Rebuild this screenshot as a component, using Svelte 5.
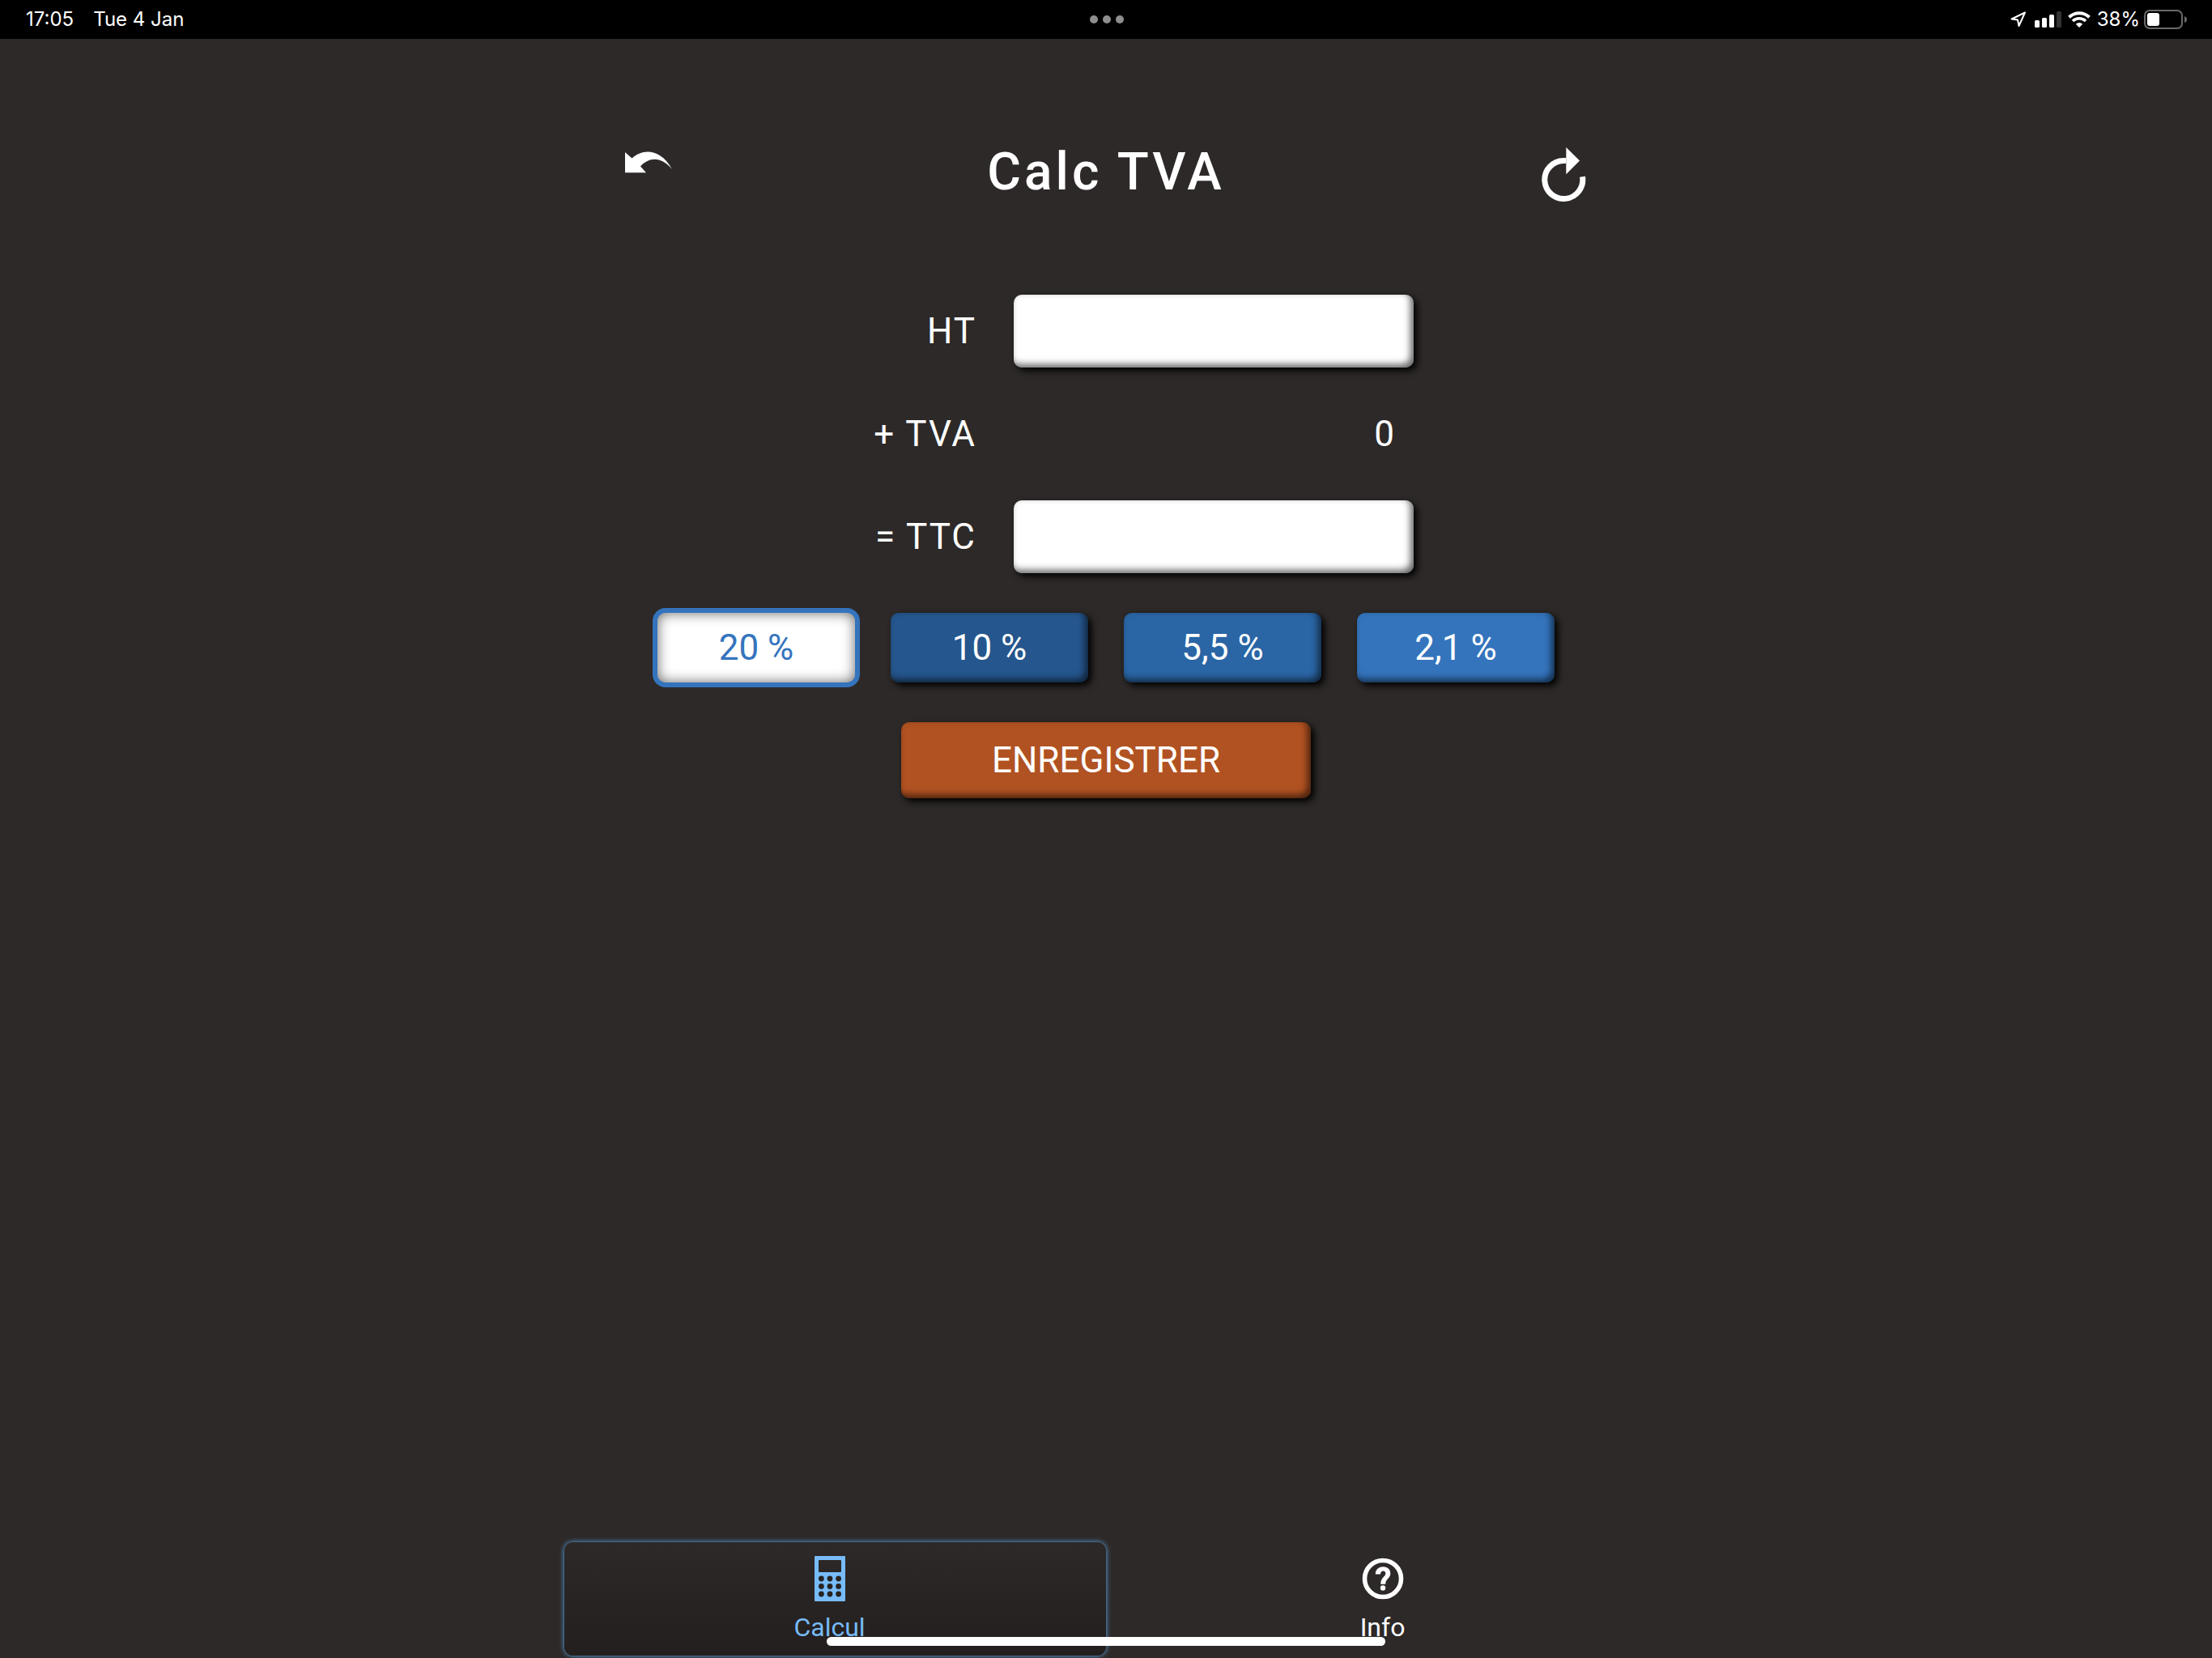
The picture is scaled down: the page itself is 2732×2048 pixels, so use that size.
<script>
  const rates = [
    { label: '20 %', tone: 'deep' },
    { label: '10 %', tone: 'dark' },
    { label: '5,5 %', tone: 'mid' },
    { label: '2,1 %', tone: 'light' }
  ];
  let selected = $state('20 %');
  let ht = $state('');
  let ttc = $state('');
</script>

<div class="screen">
  <div class="status">
    <div class="clock"><span>17:05</span><span>Tue 4 Jan</span></div>
    <svg class="dots" width="42" height="10" viewBox="0 0 42 10" fill="#8e8e8e" aria-hidden="true">
      <circle cx="5" cy="5" r="5" /><circle cx="21" cy="5" r="5" /><circle cx="37" cy="5" r="5" />
    </svg>
    <div class="indicators">
      <svg width="20" height="20" viewBox="0 0 20 20" fill="none" stroke="#fff" stroke-width="2" stroke-linejoin="round" aria-hidden="true">
        <path d="M1.5 9.5 18 1.5 10.5 18 9 10.5Z" />
      </svg>
      <svg class="signal" width="33" height="20" viewBox="0 0 33 20" fill="#fff" aria-hidden="true">
        <rect x="0" y="11" width="6" height="9" rx="1.5" />
        <rect x="9" y="8" width="6" height="12" rx="1.5" />
        <rect x="18" y="4" width="6" height="16" rx="1.5" />
        <rect x="27" y="0" width="6" height="20" rx="1.5" fill="#333" />
      </svg>
      <svg class="wifi" width="28" height="20" viewBox="0 0 28 20" aria-hidden="true">
        <path d="M1.5 7.2A18 18 0 0 1 26.5 7.2" fill="none" stroke="#fff" stroke-width="4" />
        <path d="M6 12A11.5 11.5 0 0 1 22 12" fill="none" stroke="#fff" stroke-width="3.6" />
        <path d="M14 20 9.8 15.8A6 6 0 0 1 18.2 15.8Z" fill="#fff" />
      </svg>
      <span>38%</span>
      <svg class="battery" width="54" height="24" viewBox="0 0 54 24" aria-hidden="true">
        <rect x="1" y="1" width="46" height="22" rx="6" fill="none" stroke="#6a6a6a" stroke-width="2" />
        <rect x="4" y="4" width="15" height="16" rx="3" fill="#fff" />
        <path d="M50 8Q53 9 53 12T50 16Z" fill="#6a6a6a" />
      </svg>
    </div>
  </div>

  <header>
    <button class="tool" aria-label="Annuler">
      <svg width="60" height="64" viewBox="0 0 60 64" fill="#fff">
        <path d="M1 11 9.500 18.500C22 7 44 5 59 32C46 17 32 16 20 28.500L27 36.300H1Z" />
      </svg>
    </button>
    <h1>Calc TVA</h1>
    <button class="tool" aria-label="Réinitialiser">
      <svg width="60" height="72" viewBox="0 0 60 72">
        <path d="M33.300 21.500H30A23.500 23.500 0 1 0 53.500 41.300" fill="none" stroke="#fff" stroke-width="7" />
        <path d="M33.300 5 50 21.500 33.300 38.300Z" fill="#fff" />
      </svg>
    </button>
  </header>

  <main>
    <div class="amounts">
      <label for="ht">HT</label>
      <input id="ht" type="text" inputmode="decimal" bind:value={ht} />
      <span class="name">+ TVA</span>
      <output for="ht ttc">0</output>
      <label for="ttc">= TTC</label>
      <input id="ttc" type="text" inputmode="decimal" bind:value={ttc} />
    </div>

    <div class="rates">
      {#each rates as rate}
        <button
          class={['rate', rate.tone, { chosen: selected === rate.label }]}
          aria-pressed={selected === rate.label}
          onclick={() => (selected = rate.label)}>{rate.label}</button>
      {/each}
    </div>

    <button class="save">ENREGISTRER</button>
  </main>

  <nav>
    <a class="tab current" href="#calcul" aria-current="page">
      <svg width="56" height="56" viewBox="0 0 56 56" aria-hidden="true">
        <path fill="#77bbf8" fill-rule="evenodd" d="M10 0H46Q47 0 47 1V55Q47 56 46 56H10Q9 56 9 55V1Q9 0 10 0ZM15 5Q14 5 14 6V19Q14 20 15 20H41Q42 20 42 19V6Q42 5 41 5Z" />
        <g fill="#272322">
          {#each [28, 37.5, 47] as cy}
            {#each [17.4, 28, 38.6] as cx}
              <circle {cx} {cy} r="3.4" />
            {/each}
          {/each}
        </g>
      </svg>
      <span>Calcul</span>
    </a>
    <a class="tab" href="#info">
      <svg width="56" height="56" viewBox="0 0 56 56" fill="none" stroke="#fff" aria-hidden="true">
        <circle cx="28" cy="28" r="22.500" stroke-width="5.600" />
        <path d="M18.800 22.500C18.800 10.500 37.300 10.500 37.300 21.500C37.300 28 31.200 28 31.200 34.800H25.200C25.200 26 31.300 26 31.300 21.500C31.300 17.500 25 17.500 25 22.500Z" fill="#fff" stroke="none" />
        <circle cx="28" cy="39.500" r="3.200" fill="#fff" stroke="none" />
      </svg>
      <span>Info</span>
    </a>
  </nav>
  <div class="home"></div>
</div>

<style>
  :global(body) {
    background: #2d2928;
  }
  .screen {
    position: relative;
    box-sizing: border-box;
    min-height: 100vh;
    display: flex;
    flex-direction: column;
    background: #2d2928;
    color: #fff;
    font-family: Roboto, sans-serif;
    overflow: hidden;
  }
  .status {
    display: grid;
    grid-template-columns: 1fr auto 1fr;
    align-items: center;
    height: 48px;
    padding: 0 30px 0 32px;
    background: #000;
    font: 24px/48px Inter, sans-serif;
  }
  .clock {
    display: flex;
    gap: 24px;
  }
  .indicators {
    display: flex;
    justify-content: flex-end;
    align-items: center;
  }
  .signal {
    margin-left: 10px;
  }
  .wifi {
    margin: 0 8px;
  }
  .battery {
    margin-left: 5px;
  }
  button {
    border: 0;
    margin: 0;
    padding: 0;
    color: #fff;
    font: 44px/86px Roboto, sans-serif;
    cursor: pointer;
  }
  header,
  main,
  nav {
    width: 50%;
    margin: 0 auto;
    box-sizing: border-box;
  }
  header {
    display: flex;
    justify-content: space-between;
    align-items: flex-start;
    padding: 129px 88px 0;
  }
  .tool {
    display: block;
    background: none;
    line-height: 0;
  }
  h1 {
    margin: 0;
    font-size: 64px;
    line-height: 72px;
    font-weight: 500;
    letter-spacing: 4px;
  }
  main {
    display: flex;
    flex-direction: column;
    align-items: center;
    padding-top: 115px;
  }
  .amounts {
    display: grid;
    grid-template-columns: 523fr 494fr 257fr;
    gap: 37px 46px;
    width: 100%;
    font-size: 44px;
    line-height: 90px;
    letter-spacing: 2px;
  }
  .amounts > label,
  .amounts > .name {
    grid-column: 1;
    text-align: right;
  }
  .amounts > input,
  .amounts > output {
    grid-column: 2;
    box-sizing: border-box;
    width: 100%;
    height: 90px;
    padding: 0 22px;
    border: 0;
    text-align: right;
    font: inherit;
  }
  input {
    border-radius: 10px;
    background: #fff;
    color: #2d2928;
    box-shadow: 4px 4px 8px #000, inset -4px -4px 8px rgba(0, 0, 0, 0.6);
  }
  .rates {
    display: grid;
    grid-template-columns: repeat(4, 1fr);
    gap: 44px;
    width: 100%;
    box-sizing: border-box;
    padding: 0 129px;
    margin: 49px 0;
  }
  .rate,
  .save {
    border-radius: 10px;
    box-shadow: 4px 4px 8px #000, inset -4px -4px 8px rgba(0, 0, 0, 0.6);
  }
  .deep {
    background: #1f4a79;
  }
  .dark {
    background: #25568d;
  }
  .mid {
    background: #2a65a5;
  }
  .light {
    background: #3474bd;
  }
  .chosen {
    background: #fff;
    color: #3474bd;
    box-shadow: 0 0 0 6px #3474bd, inset 0 0 16px rgba(0, 0, 0, 0.6);
  }
  .save {
    width: 37%;
    background: #b15222;
    line-height: 94px;
  }
  nav {
    display: grid;
    grid-template-columns: 1fr 1fr;
    margin-top: auto;
    padding-bottom: 3px;
  }
  .tab {
    display: flex;
    flex-direction: column;
    align-items: center;
    height: 140px;
    box-sizing: border-box;
    padding-top: 17px;
    color: #fff;
    text-decoration: none;
    font-size: 32px;
    line-height: 40px;
  }
  .tab span {
    margin-top: 12px;
  }
  .current {
    margin-left: 14px;
    padding-right: 14px;
    border-radius: 11px;
    color: #77bbf8;
    background: linear-gradient(#2d2928, #231f1e);
    box-shadow: 0 0 6px #5fb0f8;
  }
  .home {
    position: absolute;
    left: 50%;
    bottom: 15px;
    width: 690px;
    height: 11px;
    margin-left: -345px;
    border-radius: 6px;
    background: #fff;
  }
</style>
